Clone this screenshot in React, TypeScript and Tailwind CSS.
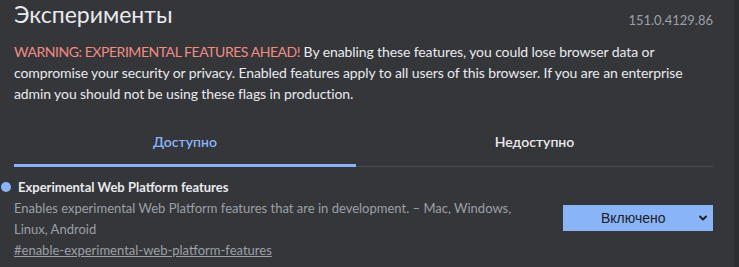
import { ChevronDown } from "lucide-react"

export default function App() {
    return (
        <div className="flex h-[267px] overflow-hidden bg-[#35363a] font-['Lato',sans-serif]">
            <div className="flex-1 pl-[14px] pr-[21px]">
                <div className="flex items-start justify-between">
                    <h1 className="mt-[-1px] text-[23px] leading-[30px] text-[#e8eaed]">Эксперименты</h1>
                    <span className="mt-[11px] text-[13px] leading-[18px] text-[#9aa0a6]">151.0.4129.86</span>
                </div>

                <p className="mt-[12px] pr-[4px] text-[14px] leading-[21px] tracking-[-0.1px] text-[#e8eaed]">
                    <span className="tracking-[-0.45px] text-[#f28b82]">WARNING: EXPERIMENTAL FEATURES AHEAD!</span> By enabling these features, you could lose browser data or compromise your security or privacy. Enabled features apply to all users of this browser. If you are an enterprise admin you should not be using these flags in production.
                </p>

                <div className="mt-[11px] flex">
                    <div className="flex h-[52px] w-[342px] items-center justify-center border-b-[3px] border-[#8ab4f8] pt-[3px] text-[14px] font-semibold text-[#8ab4f8]">
                        Доступно
                    </div>
                    <div className="flex h-[52px] flex-1 items-center justify-center border-b border-[#4a4b4f] pt-[2px] text-[14px] font-semibold text-[#e8eaed]">
                        Недоступно
                    </div>
                </div>

                <div className="relative mt-[10px] flex items-start justify-between">
                    <span className="absolute left-[-13px] top-[5px] h-[10px] w-[10px] rounded-full bg-[#8ab4f8]" />
                    <div className="w-[510px]">
                        <h2 className="pl-[4px] text-[13px] font-bold leading-[20px] text-[#e8eaed]">Experimental Web Platform features</h2>
                        <p className="mt-[1px] text-[13px] leading-[21px] text-[#9aa0a6]">
                            Enables experimental Web Platform features that are in development. – Mac, Windows, Linux, Android
                        </p>
                        <a className="block text-[13px] leading-[21px] text-[#9aa0a6] underline">#enable-experimental-web-platform-features</a>
                    </div>
                    <div className="mt-[28px] flex h-[26px] w-[150px] items-center bg-[#8ab4f8] pl-[38px] pr-[4px] font-['Liberation_Sans',sans-serif] text-[14px] text-[#202124]">
                        <span className="flex-1">Включено</span>
                        <ChevronDown className="h-[12px] w-[12px]" strokeWidth={4} />
                    </div>
                </div>
            </div>
            <div className="w-[5px] bg-[#2c2d30]" />
        </div>
    )
}
